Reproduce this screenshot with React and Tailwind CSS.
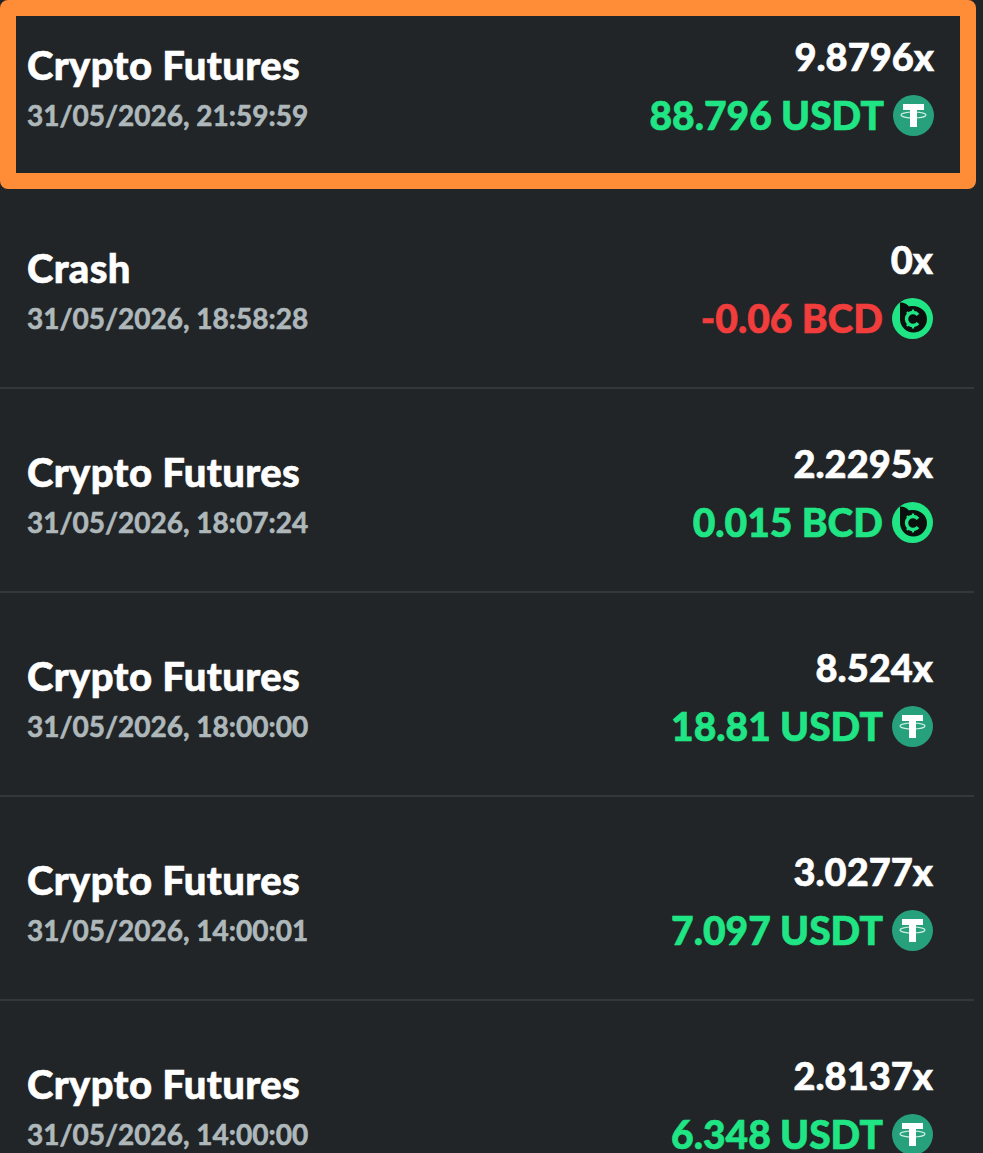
import React from 'react';

const TetherIcon = () => (
  <svg viewBox="0 0 41 41" className="w-[41px] h-[41px] shrink-0">
    <circle cx="20.5" cy="20.5" r="20.5" fill="#26a17b" />
    <ellipse cx="20.5" cy="20" rx="12.5" ry="3" fill="none" stroke="#cfeee4" strokeWidth="1.2" />
    <path d="M10 9h21v6h-7v17h-7V15h-7z" fill="#fff" />
  </svg>
);

const BcdIcon = () => (
  <svg viewBox="0 0 41 41" className="w-[41px] h-[41px] shrink-0">
    <circle cx="20.5" cy="20.5" r="20.5" fill="#20e584" />
    <path d="M8 4.5 C12.5 4.5 15.5 6.5 17 8.5 C26.5 6.5 35 12.5 35 21 C35 28.5 29 34.5 21.5 34.5 C14 34.5 8 28.5 8 21z" fill="#0b0f0e" />
    <path d="M26 16.8A6.5 6.5 0 1 0 26 25.2" fill="none" stroke="#20e584" strokeWidth="3.4" />
    <path d="M21 11.5v2.5M21 28v2.5M15 14l1.5 2M15 28l1.5-2" stroke="#20e584" strokeWidth="2.2" />
  </svg>
);

const bets = [
  { game: 'Crash', date: '31/05/2026, 18:58:28', mult: '0x', amount: '-0.06 BCD', coin: 'bcd', loss: true },
  { game: 'Crypto Futures', date: '31/05/2026, 18:07:24', mult: '2.2295x', amount: '0.015 BCD', coin: 'bcd' },
  { game: 'Crypto Futures', date: '31/05/2026, 18:00:00', mult: '8.524x', amount: '18.81 USDT', coin: 'usdt' },
  { game: 'Crypto Futures', date: '31/05/2026, 14:00:01', mult: '3.0277x', amount: '7.097 USDT', coin: 'usdt' },
  { game: 'Crypto Futures', date: '31/05/2026, 14:00:00', mult: '2.8137x', amount: '6.348 USDT', coin: 'usdt' },
];

const BetContent = ({ bet }) => (
  <div className="flex justify-between items-start w-full">
    <div className="flex flex-col pt-[9px]">
      <span className="text-[40px] leading-[48px] font-black text-white tracking-[0.35px] [-webkit-text-stroke:0.6px]">{bet.game}</span>
      <span className="text-[28px] leading-[52px] font-bold text-[#aeb8bb] whitespace-nowrap [-webkit-text-stroke:0.6px]">{bet.date}</span>
    </div>
    <div className="flex flex-col items-end">
      <span className="text-[38px] leading-[48px] font-black text-white [-webkit-text-stroke:0.6px]">{bet.mult}</span>
      <div className="flex items-center gap-[9px] mt-[11px] h-[48px]">
        <span className={`text-[39px] leading-[48px] font-black [-webkit-text-stroke:0.6px] ${bet.loss ? 'text-[#f23d3d]' : 'text-[#20e584]'}`}>
          {bet.amount}
        </span>
        {bet.coin === 'usdt' ? <TetherIcon /> : <BcdIcon />}
      </div>
    </div>
  </div>
);

export default function App() {
  const highlighted = { game: 'Crypto Futures', date: '31/05/2026, 21:59:59', mult: '9.8796x', amount: '88.796 USDT', coin: 'usdt' };

  return (
    <div className="h-[1153px] overflow-hidden bg-[#212527] font-['Lato',sans-serif]">
      <div className="w-[976px]">
        <div className="h-[189px] border-[16px] border-[#ff8c37] rounded-[8px] pl-[11px] pr-[26px] pt-[16px]">
          <BetContent bet={highlighted} />
        </div>
        <div className="w-[974px]">
          {bets.map((bet, i) => (
            <div
              key={i}
              className="h-[204px] first:h-[200px] pl-[27px] pr-[41px] pt-[50px] first:pt-[46px] border-b-2 border-[#33383a] last:border-b-0"
            >
              <BetContent bet={bet} />
            </div>
          ))}
        </div>
      </div>
    </div>
  );
}
